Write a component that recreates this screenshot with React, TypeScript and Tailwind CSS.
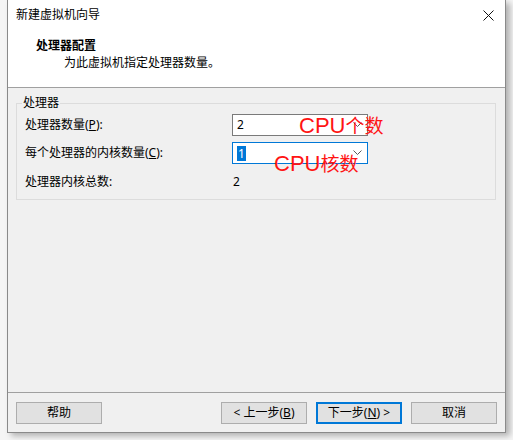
import React from 'react';

const font = { fontFamily: '"Noto Sans", "Noto Sans CJK SC", sans-serif' };

const Chevron = () => (
  <svg width="9" height="6" viewBox="0 0 9 6" className="absolute right-[5px] top-[7px]">
    <path d="M0.5 0.5 L4.5 4.5 L8.5 0.5" fill="none" stroke="#5a5a5a" strokeWidth="1" />
  </svg>
);

const Btn = ({ children, primary = false }) => (
  <div
    className={`w-[86px] h-[22px] flex items-center justify-center bg-[#e1e1e1] text-[12px] text-black ${
      primary ? 'border-2 border-[#0078d7]' : 'border border-[#adadad]'
    }`}
  >
    {children}
  </div>
);

const Row = ({ label, children }) => (
  <div className="flex items-center">
    <span className="w-[207px] text-[12px] leading-[18px] text-black">{label}</span>
    {children}
  </div>
);

export default function App() {
  return (
    <div className="relative w-[513px] h-[440px] bg-[#f5f5f5] overflow-hidden" style={font}>
      <div className="ml-[7px] w-[499px] h-[433px] flex flex-col bg-[#f0f0f0] border-x border-b border-[#8a8a8a] shadow-[4px_3px_6px_rgba(0,0,0,0.28)]">
        {/* title + header */}
        <div className="h-[88px] bg-white border-b border-[#a0a0a0] flex flex-col">
          <div className="h-[30px] flex items-center justify-between pl-[8px] pr-[10px]">
            <span className="text-[12px] text-black">新建虚拟机向导</span>
            <svg width="11" height="11" viewBox="0 0 11 11" className="mr-[1px]">
              <path d="M0.5 0.5 L10.5 10.5 M10.5 0.5 L0.5 10.5" stroke="#111" strokeWidth="1" />
            </svg>
          </div>
          <div className="pl-[28px] pt-[8px] text-[12px] leading-[16px] text-black">
            <div className="font-bold">处理器配置</div>
            <div className="pl-[28px] mt-[1px]">为此虚拟机指定处理器数量。</div>
          </div>
        </div>

        {/* body */}
        <div className="flex-1 flex flex-col">
          <div className="relative mt-[15px] ml-[8px] w-[480px] border border-[#dcdcdc] pt-[10px] pb-[8px] pl-[8px]">
            <span className="absolute -top-[9px] left-[5px] px-[1px] bg-[#f0f0f0] text-[12px] leading-[16px] text-black">
              处理器
            </span>
            <Row label={<>处理器数量(<u>P</u>):</>}>
              <div className="relative w-[136px] h-[22px] bg-white border border-[#7a7a7a] flex items-center pl-[4px] text-[12px]">
                2
                <Chevron />
              </div>
            </Row>
            <div className="h-[6px]" />
            <Row label={<>每个处理器的内核数量(<u>C</u>):</>}>
              <div className="relative w-[136px] h-[22px] bg-white border border-[#0078d7] flex items-center pl-[4px] text-[12px]">
                <span className="bg-[#0078d7] text-white leading-[15px] px-[1px]">1</span>
                <Chevron />
              </div>
            </Row>
            <div className="h-[9px]" />
            <Row label="处理器内核总数:">
              <span className="text-[12px] leading-[18px] pl-[1px]">2</span>
            </Row>
          </div>

          <div className="flex-1" />
          <div className="border-t border-[#a0a0a0] pt-[9px] pb-[8px] px-[8px] flex">
            <Btn>帮助</Btn>
            <div className="flex-1" />
            <div className="flex gap-[9px]">
              <Btn>&lt; 上一步(<u>B</u>)</Btn>
              <Btn primary>下一步(<u>N</u>) &gt;</Btn>
              <Btn>取消</Btn>
            </div>
          </div>
        </div>
      </div>

      {/* red annotations */}
      <span
        className="absolute left-[299px] top-[114px] text-[22px] leading-[22px] text-[#ff1414] whitespace-nowrap"
        style={{ fontFamily: '"Liberation Sans", "Noto Sans CJK SC", sans-serif' }}
      >
        CPU<span className="text-[19px]" style={{ fontFamily: '"Noto Sans CJK SC", sans-serif' }}>个数</span>
      </span>
      <span
        className="absolute left-[274px] top-[152px] text-[22px] leading-[22px] text-[#ff1414] whitespace-nowrap"
        style={{ fontFamily: '"Liberation Sans", "Noto Sans CJK SC", sans-serif' }}
      >
        CPU<span className="text-[19px]" style={{ fontFamily: '"Noto Sans CJK SC", sans-serif' }}>核数</span>
      </span>
    </div>
  );
}
